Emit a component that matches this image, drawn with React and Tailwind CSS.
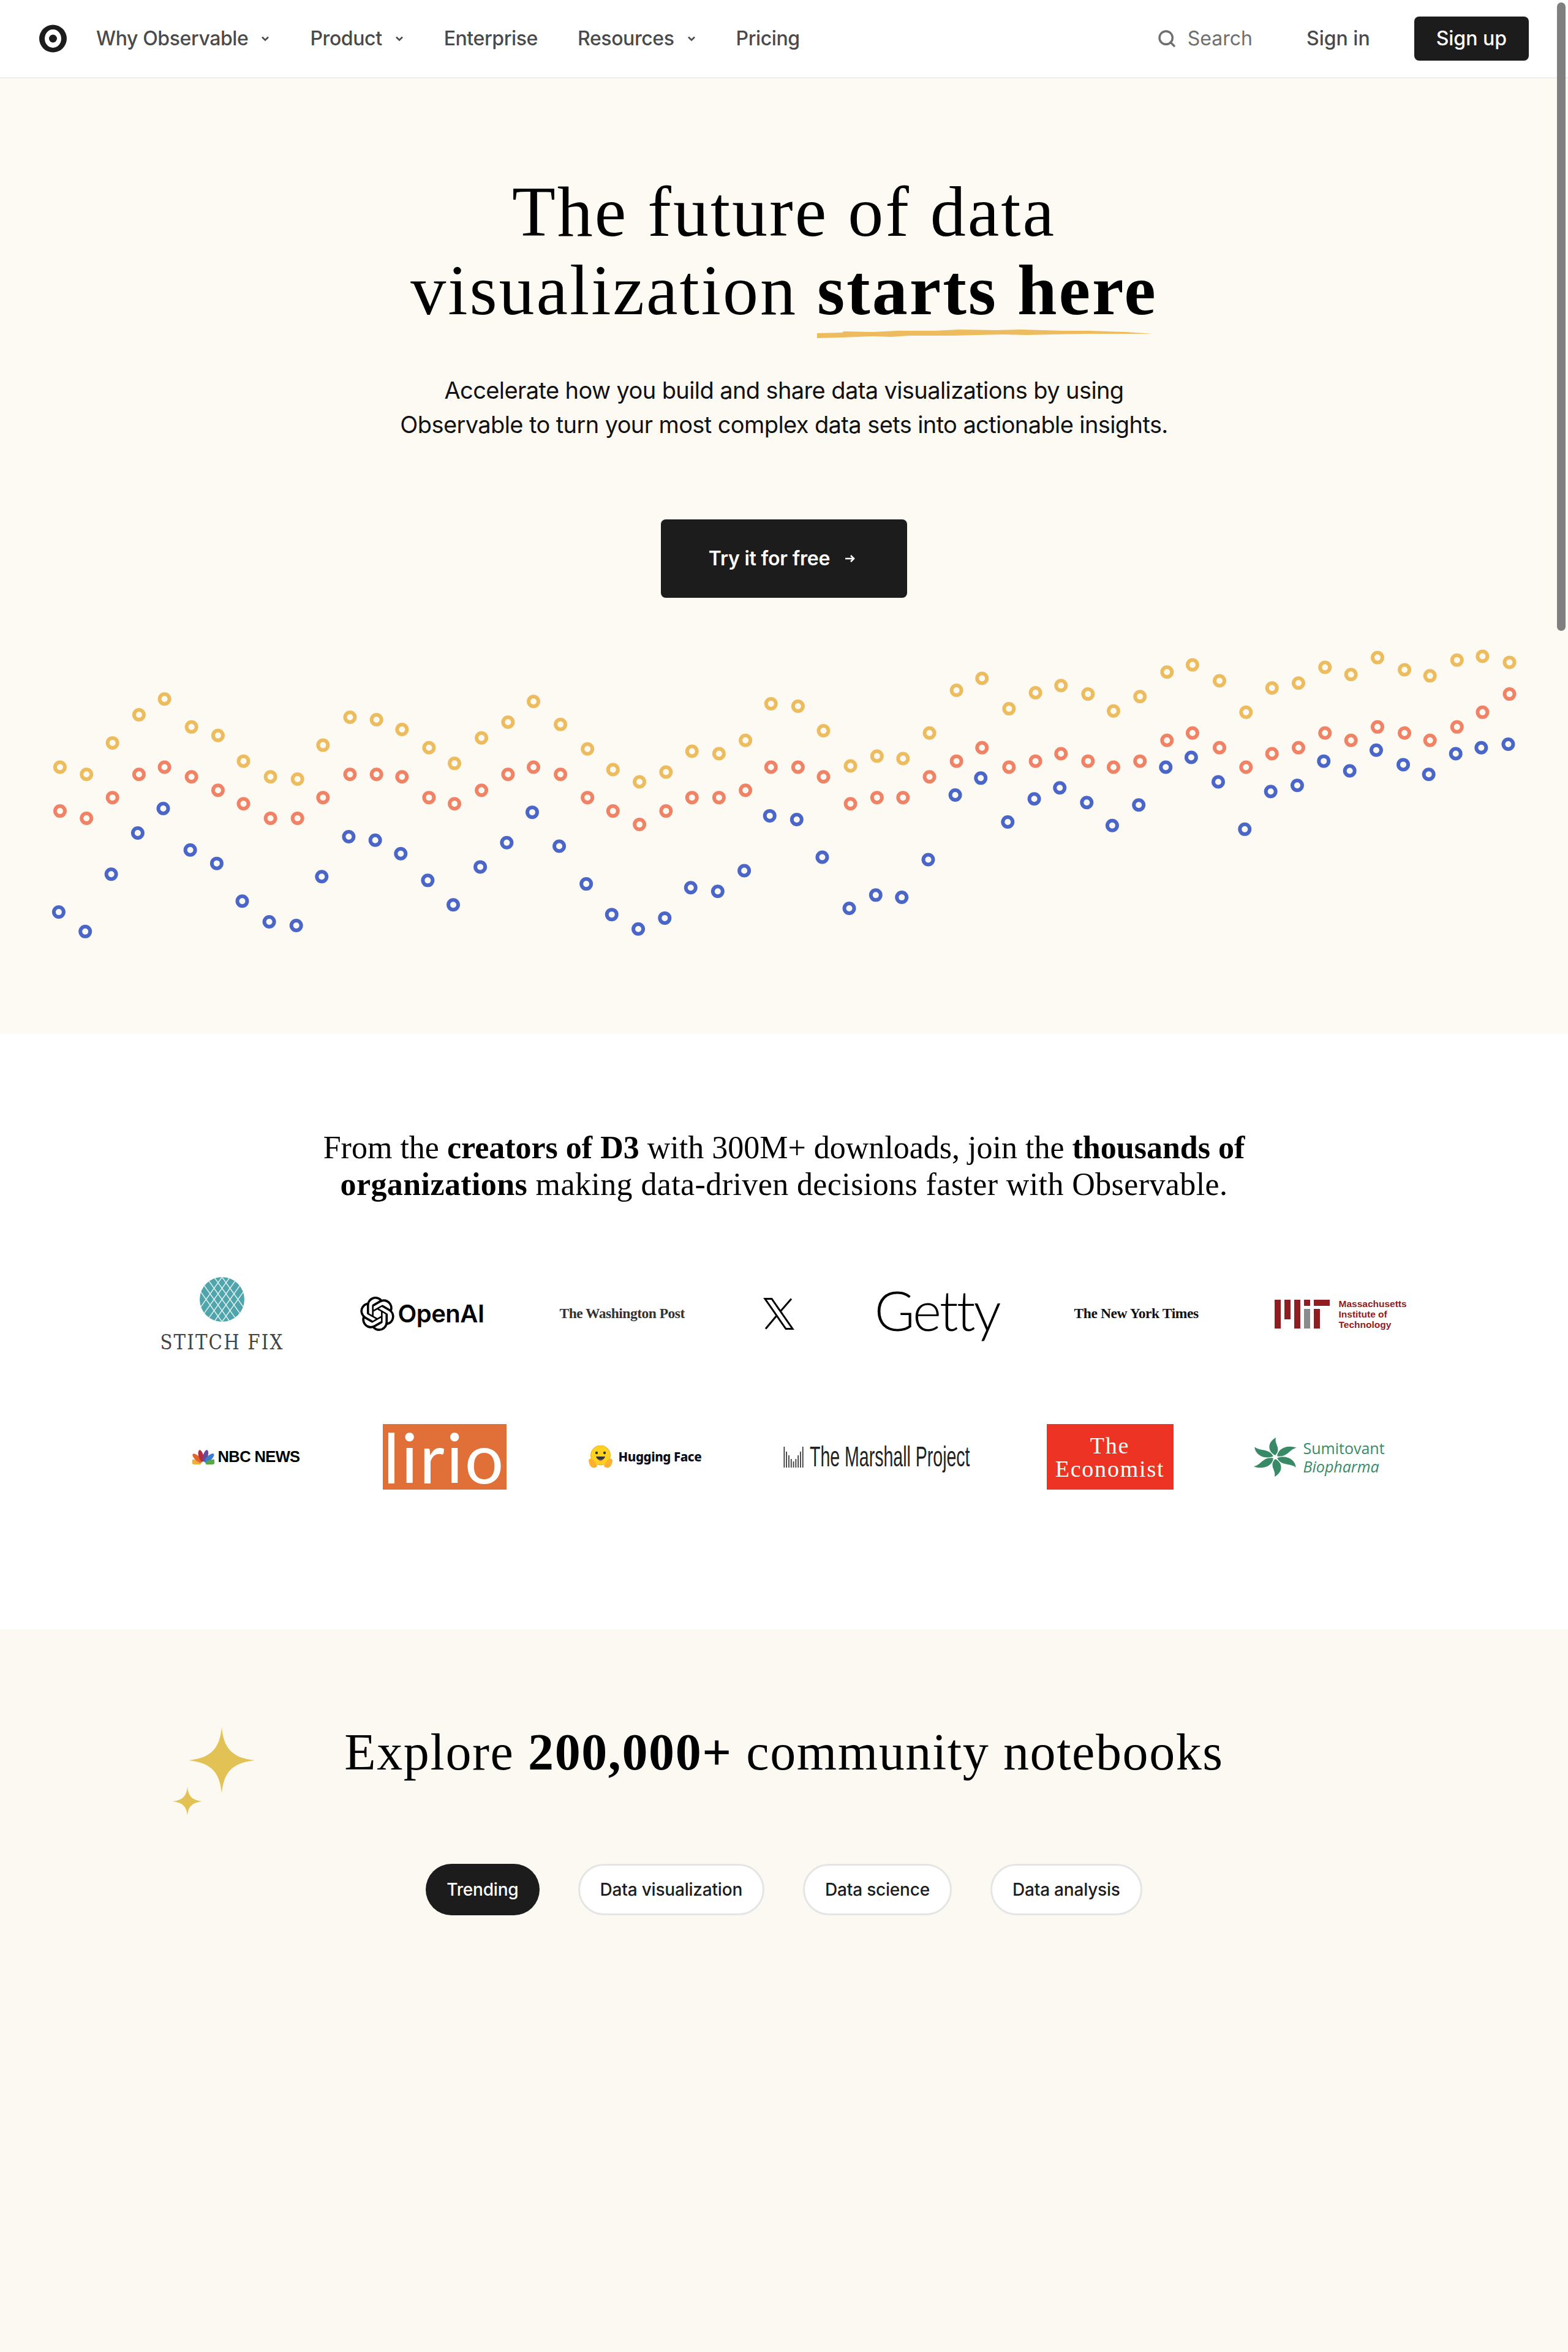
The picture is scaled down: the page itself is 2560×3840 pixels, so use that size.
import React from 'react';
import {Search} from 'lucide-react';
import {SiOpenai} from 'react-icons/si';

// dot rows read off the reference crops, left half then right half
const colsLeft = [120, 173, 225, 278, 329, 383, 436, 487, 541, 595, 646, 700, 753, 804, 858, 909, 963, 1016, 1067, 1121, 1175, 1226, 1279, 1332, 1384, 1438, 1491, 1542];
const colsRight = [28, 79, 133, 186, 238, 291, 345, 396, 450, 503, 554, 608, 659, 712, 766, 817, 871, 924, 976, 1029, 1082, 1134, 1187, 1241, 1292, 1346, 1397, 1451];
const series = [
    {
        color: "#edbc5f", shift: 0,
        ys: [658, 693, 541, 405, 329, 464, 505, 629, 705, 716, 552, 417, 429, 476, 564, 640, 517, 441, 341, 452, 570, 670, 729, 682, 581, 593, 529, 352,
            364, 482, 652, 605, 617, 493, 287, 229, 376, 299, 264, 305, 387, 317, 199, 164, 241, 393, 276, 252, 176, 211, 129, 188, 217, 141, 123, 152]
    },
    {
        color: "#f08265", shift: 0,
        ys: [870, 905, 805, 693, 658, 705, 770, 835, 905, 905, 805, 693, 693, 705, 805, 835, 770, 693, 658, 693, 805, 870, 935, 870, 805, 805, 770, 658,
            658, 705, 835, 805, 805, 705, 629, 564, 658, 629, 593, 629, 658, 629, 529, 493, 564, 658, 593, 564, 493, 529, 464, 493, 529, 464, 393, 305]
    },
    {
        color: "#4a66c9", shift: -2.5,
        ys: [1358, 1452, 1175, 976, 858, 1058, 1123, 1305, 1405, 1423, 1187, 994, 1011, 1076, 1205, 1323, 1140, 1023, 876, 1040, 1222, 1370, 1440, 1387, 1240, 1258, 1158, 893,
            911, 1093, 1340, 1276, 1287, 1105, 793, 711, 923, 811, 758, 829, 940, 841, 658, 611, 729, 958, 776, 746, 629, 676, 576, 646, 693, 593, 564, 547]
    }
];

function DotChart() {
    const colX = [...colsLeft.map(x => x / 1.225), ...colsRight.map(x => 1280 + x / 1.225)];
    return (
        <svg viewBox="0 0 2560 530" className="block w-[2560px] h-[530px] mt-[54px]" fill="none">
            {series.map(s => s.ys.map((y, i) => (
                <circle key={s.color + i} cx={colX[i] + s.shift / 1.225} cy={y / 2.958} r="8" stroke={s.color} strokeWidth="6"/>
            )))}
        </svg>
    );
}

function Chevron() {
    return (
        <svg width="16" height="10" viewBox="0 0 16 10" fill="none" className="ml-[20px]">
            <path d="M3 2.5 L8 7.5 L13 2.5" stroke="#4a4a4a" strokeWidth="2.6"/>
        </svg>
    );
}

function Header() {
    return (
        <header className="h-[128px] bg-white border-b-2 border-[#eeeeee] flex items-center pl-[64px] pr-[64px] text-[32px] font-medium text-[#4a4a4a]">
            <svg width="45" height="46" viewBox="0 0 45 46" className="mr-[48px]">
                <circle cx="22.5" cy="23" r="22.5" fill="#1c1c1c"/>
                <ellipse cx="22.5" cy="23" rx="13.5" ry="15" fill="#fff"/>
                <circle cx="22.5" cy="23" r="6.5" fill="#1c1c1c"/>
            </svg>
            <nav className="flex items-center gap-[65px] tracking-[-0.4px]">
                <a className="flex items-center">Why Observable<Chevron/></a>
                <a className="flex items-center">Product<Chevron/></a>
                <a>Enterprise</a>
                <a className="flex items-center">Resources<Chevron/></a>
                <a>Pricing</a>
            </nav>
            <div className="ml-auto flex items-center">
                <Search size={32} strokeWidth={2.6} className="text-[#6f6f6f] mr-[18px]"/>
                <span className="text-[#6f6f6f] font-normal mr-[88px]">Search</span>
                <a className="mr-[72px]">Sign in</a>
                <a className="h-[72px] px-[36px] flex items-center rounded-[8px] bg-[#1c1c1c] text-white">Sign up</a>
            </div>
        </header>
    );
}

function Hero() {
    return (
        <section className="bg-[#fdfaf3] flex flex-col items-center pt-[154px] pb-[128px] h-[1560px]">
            <h1 className="text-center text-[116px] leading-[128px] tracking-[3px] text-black [font-family:'Liberation_Serif',serif] font-normal">
                The future of data<br/>
                visualization <span className="relative inline-block font-bold">starts here
                    <svg viewBox="0 0 544 14" preserveAspectRatio="none" className="absolute left-0 bottom-[-14px] w-[548px] h-[14px]">
                        <path d="M0 6 L40 5 L44 3 L90 4 L130 2 L190 2 L230 0 L290 1 L330 0 L400 2 L440 2 L500 4 L544 7 L500 7 L440 7 L380 8 L340 9 L300 8 L220 10 L150 10 L120 12 L90 11 L40 13 L0 14 Z" fill="#edbc5f"/>
                    </svg>
                </span>
            </h1>
            <p className="mt-[71px] text-center text-[38px] leading-[56px] tracking-[-0.6px] text-[#111111]">
                Accelerate how you build and share data visualizations by using<br/>
                Observable to turn your most complex data sets into actionable insights.
            </p>
            <a className="mt-[127px] w-[402px] h-[128px] pr-[6px] rounded-[8px] bg-[#1c1c1c] text-white text-[32px] font-semibold tracking-[-0.2px] flex items-center justify-center">
                Try it for free
                <svg width="18" height="14" viewBox="0 0 18 14" fill="none" className="ml-[24px]">
                    <path d="M1 7 H15 M10 2 L15 7 L10 12" stroke="#fff" strokeWidth="2.6"/>
                </svg>
            </a>
            <DotChart/>
        </section>
    );
}

function StitchFix() {
    const lines = [-26, -13, 0, 13, 26];
    return (
        <div className="w-[203px] flex flex-col items-center">
            <svg width="73" height="73" viewBox="0 0 73 73" className="shrink-0">
                <defs>
                    <clipPath id="stitch"><circle cx="36.5" cy="36.5" r="36.5"/></clipPath>
                </defs>
                <circle cx="36.5" cy="36.5" r="36.5" fill="#4fa5ab"/>
                <g clipPath="url(#stitch)" stroke="#e6f3f3" strokeWidth="1.4">
                    {lines.map(d => (
                        <g key={d}>
                            <path d={`M${36.5 + d - 26} 0 L${36.5 + d + 26} 73`}/>
                            <path d={`M${36.5 + d + 26} 0 L${36.5 + d - 26} 73`}/>
                        </g>
                    ))}
                </g>
            </svg>
            <span className="mt-[19px] text-[34px] leading-[28px] tracking-[2.5px] text-[#444444] whitespace-nowrap [font-family:'DejaVu_Serif',serif] font-light scale-x-[0.86]">STITCH FIX</span>
        </div>
    );
}

function OutlineX() {
    return (
        <svg width="51" height="52" viewBox="0 0 51 52" fill="none" stroke="#000" strokeWidth="3" className="shrink-0">
            <path d="M3 1.5 H14 L48 50.5 H37 Z"/>
            <path d="M46 1.5 L29 21 M22 29 L4 50.5"/>
        </svg>
    );
}

function Peacock() {
    const feathers = [
        ["#f0ae3c", -78], ["#e4652c", -47], ["#b0303f", -16], ["#6a4a96", 15], ["#3a7fce", 46], ["#55a945", 78]
    ];
    return (
        <svg width="36" height="24" viewBox="0 0 36 24" className="mr-[6px] shrink-0">
            {feathers.map(([c, a]) => (
                <ellipse key={c} cx="18" cy="9.5" rx="4" ry="10" fill={c} transform={`rotate(${a} 18 23)`}/>
            ))}
        </svg>
    );
}

function HuggingEmoji() {
    return (
        <svg width="41" height="38" viewBox="0 0 41 38" className="mr-[9px] shrink-0">
            <circle cx="20.5" cy="16" r="16" fill="#ffd21e" stroke="#f5a623" strokeWidth="1"/>
            <circle cx="14" cy="12" r="2.2" fill="#32343d"/>
            <circle cx="27" cy="12" r="2.2" fill="#32343d"/>
            <path d="M13 18 C16 26 25 26 28 18 Z" fill="#32343d"/>
            <path d="M17 23 C19 26 22 26 24 23 Z" fill="#ef4e4e"/>
            <path d="M1 24 C4 18 12 24 15 34 C10 39 2 37 1 24 Z" fill="#ffb02e"/>
            <path d="M40 24 C37 18 29 24 26 34 C31 39 39 37 40 24 Z" fill="#ffb02e"/>
        </svg>
    );
}

function MarshallBars() {
    const bars = [34, 26, 20, 14, 10, 14, 20, 26, 34];
    return (
        <svg width="33" height="34" viewBox="0 0 33 34" className="mr-[10px] shrink-0">
            {bars.map((h, i) => (
                <rect key={i} x={i * 3.8 + 0.5} y={34 - h} width="1.7" height={h} fill="#333333"/>
            ))}
        </svg>
    );
}

function Pinwheel() {
    return (
        <svg width="72" height="64" viewBox="-29 -32 58 64" preserveAspectRatio="none" className="mr-[10px] shrink-0">
            {[0, 60, 120, 180, 240, 300].map(a => (
                <path key={a} d="M0 -3 C-10 -9 -11 -24 1 -32 C-2 -22 9 -14 0 -3 Z" fill="#388a66" transform={`rotate(${a})`}/>
            ))}
        </svg>
    );
}

function Logos() {
    return (
        <section className="bg-white h-[972px] flex flex-col items-center pt-[156px]">
            <h2 className="text-center text-[52px] leading-[60px] text-black [font-family:'Liberation_Serif',serif] font-normal">
                From the <b>creators of D3</b> with 300M+ downloads, join the <b>thousands of</b><br/>
                <span className="tracking-[0.4px]"><b>organizations</b> making data-driven decisions faster with Observable.</span>
            </h2>
            <div className="mt-[121px] h-[120px] flex items-center gap-[124px]">
                <StitchFix/>
                <div className="w-[202px] flex items-center text-black">
                    <SiOpenai size={56} className="mr-[6px] shrink-0"/>
                    <span className="text-[40px] font-semibold tracking-[-0.5px]">OpenAI</span>
                </div>
                <div className="w-[202px] text-center text-[23.5px] font-bold text-[#333333] whitespace-nowrap [font-family:'Liberation_Serif',serif] tracking-[-0.5px]">The Washington Post</div>
                <div className="w-[64px] flex justify-center text-black">
                    <OutlineX/>
                </div>
                <div className="w-[202px] pb-[14px] text-center text-[90px] leading-[100px] text-black [font-family:Lato,sans-serif] font-light tracking-[-3px]">Getty</div>
                <div className="w-[203px] text-center text-[23.5px] font-bold text-[#111111] whitespace-nowrap [font-family:'Liberation_Serif',serif] tracking-[-0.4px]">The New York Times</div>
                <div className="w-[219px] flex items-center">
                    <svg width="90" height="47" viewBox="0 0 90 47" className="mr-[15px] shrink-0">
                        <g fill="#8f1d22">
                            <rect x="0" y="0" width="10" height="47"/>
                            <rect x="16" y="0" width="10" height="32"/>
                            <rect x="32" y="0" width="10" height="47"/>
                            <rect x="48" y="0" width="10" height="10"/>
                            <rect x="64" y="0" width="26" height="10"/>
                            <rect x="64" y="15" width="10" height="32"/>
                        </g>
                        <rect x="48" y="15" width="10" height="32" fill="#8a8b8c"/>
                    </svg>
                    <div className="text-[15.5px] leading-[17px] font-bold text-[#8f1d22] [font-family:'Liberation_Sans',sans-serif] whitespace-nowrap">
                        Massachusetts<br/>Institute of<br/>Technology
                    </div>
                </div>
            </div>
            <div className="mt-[120px] h-[107px] flex items-center gap-[130px] pl-[13px]">
                <div className="w-[175px] flex items-center text-black">
                    <Peacock/>
                    <span className="text-[25.5px] font-bold whitespace-nowrap [font-family:'Liberation_Sans',sans-serif] tracking-[-0.6px]">NBC NEWS</span>
                </div>
                <div className="ml-[6px] w-[202px] h-[107px] bg-[#e07038] flex items-center justify-center text-white text-[112px] leading-[100px] [font-family:Lato,sans-serif] font-normal tracking-[3px]">lirio</div>
                <div className="ml-[3px] flex items-center text-[#0b0f1e]">
                    <HuggingEmoji/>
                    <span className="w-[134px] text-[20.5px] font-extrabold whitespace-nowrap [font-family:'Noto_Sans',sans-serif] tracking-[-0.4px]">Hugging Face</span>
                </div>
                <div className="ml-[5px] w-[303px] flex items-center text-[#222222]">
                    <MarshallBars/>
                    <span className="w-[260px] text-[46px] whitespace-nowrap [font-family:'Liberation_Sans',sans-serif] origin-left scale-x-[0.62]">The Marshall Project</span>
                </div>
                <div className="-ml-[3px] w-[207px] h-[107px] bg-[#ed3324] flex items-center justify-center text-center text-white text-[38px] leading-[38px] tracking-[1.8px] [font-family:'Liberation_Serif',serif]">The<br/>Economist</div>
                <div className="w-[214px] flex items-center text-[#388a66]">
                    <Pinwheel/>
                    <div className="text-[25px] leading-[30px] whitespace-nowrap [font-family:'Open_Sans',sans-serif]">
                        Sumitovant<br/><i>Biopharma</i>
                    </div>
                </div>
            </div>
        </section>
    );
}

function Sparkles() {
    return (
        <svg width="134" height="144" viewBox="0 0 134 144" className="absolute left-[-280px] top-[5px]" fill="#e3c255">
            <path d="M80 0 C83 32 95 50 134 54 C95 58 83 76 80 108 C77 76 65 58 26 54 C65 50 77 32 80 0 Z"/>
            <path d="M24 97 C25.5 112 31 119 48 121 C31 123 25.5 130 24 144 C22.5 130 17 123 0 121 C17 119 22.5 112 24 97 Z"/>
        </svg>
    );
}

function Explore() {
    const tags = ["Data visualization", "Data science", "Data analysis"];
    return (
        <section className="bg-[#fcf9f2] h-[1180px] flex flex-col items-center pt-[155px]">
            <div className="relative">
                <Sparkles/>
                <h2 className="text-[84px] leading-[92px] tracking-[1.6px] text-black [font-family:'Liberation_Serif',serif] font-normal">
                    Explore <b>200,000+</b> community notebooks
                </h2>
            </div>
            <div className="mt-[136px] flex items-center gap-[63px] text-[28px] font-medium tracking-[-0.2px]">
                <a className="h-[84px] px-[34px] flex items-center rounded-full bg-[#1c1c1c] text-white">Trending</a>
                {tags.map(t => (
                    <a key={t} className="h-[84px] px-[33px] flex items-center rounded-full bg-white border-[3px] border-[#e5e5e5] text-[#1c1c1c]">{t}</a>
                ))}
            </div>
        </section>
    );
}

export default function App() {
    return (
        <div className="relative w-[2560px] h-[3840px] overflow-hidden [font-family:Inter,sans-serif]">
            <Header/>
            <Hero/>
            <Logos/>
            <Explore/>
            <div className="absolute top-[4px] right-[4px] w-[14px] h-[1026px] rounded-full bg-[#7f7f7f]"/>
        </div>
    );
}
